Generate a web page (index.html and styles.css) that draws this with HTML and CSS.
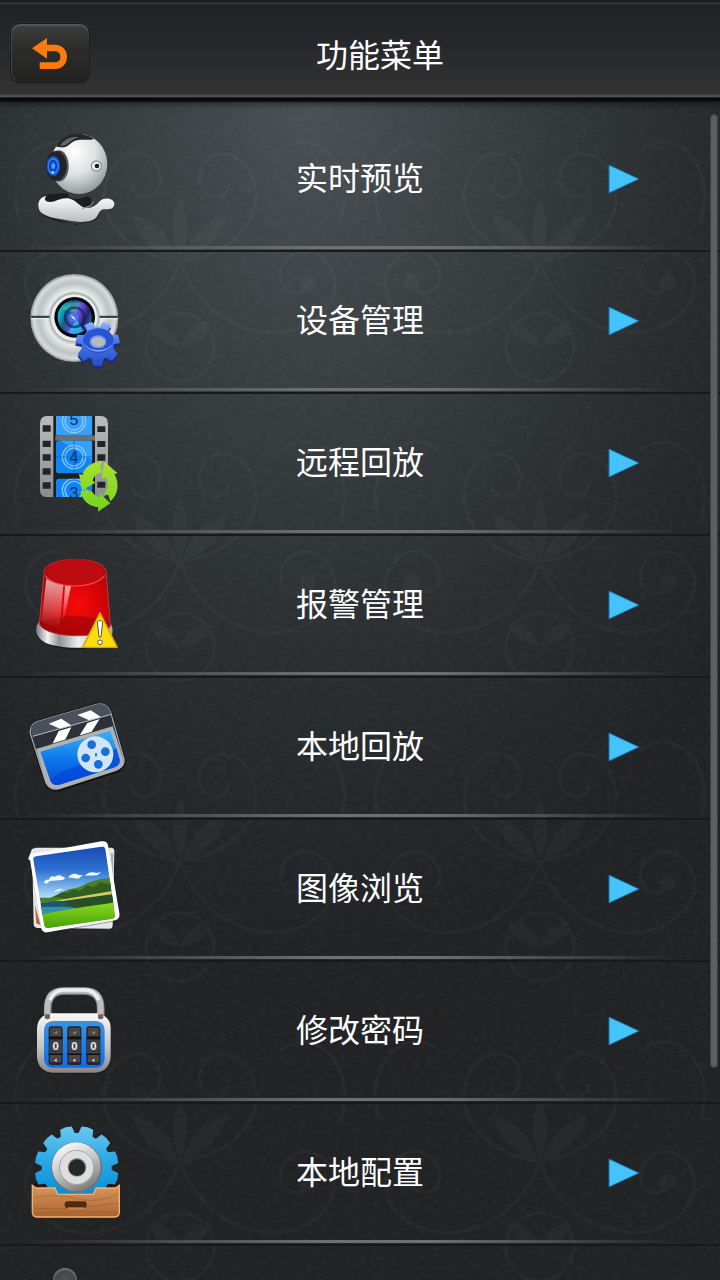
FILE: index.html
```html
<!DOCTYPE html>
<html lang="zh-CN">
<head>
  <meta charset="UTF-8">
  <meta name="viewport" content="width=device-width, initial-scale=1">
  <title>功能菜单</title>
  <link rel="stylesheet" href="styles.css">
</head>
<body>

  <header class="top-bar">
    <button class="back-button" type="button" aria-label="返回">
      <svg viewBox="90 105 120 105" width="40" height="35">
        <path d="M96 142 L141 111 V131 H164 C187 131 201 147 201 167 C201 188 187 204 164 204 H119 V184 H163 C174 184 181 178 181 167 C181 157 174 151 163 151 H141 V173 Z" fill="#ff7a0c"/>
      </svg>
    </button>
    <h1>功能菜单</h1>
  </header>

  <main class="menu-area">
    <!-- leather grain and faint flower pattern -->
    <svg class="backdrop" aria-hidden="true">
      <defs>
        <filter id="grain" x="0" y="0" width="100%" height="100%">
          <feTurbulence type="fractalNoise" baseFrequency="0.15 0.25" numOctaves="3" seed="4"/>
          <feColorMatrix values="0 0 0 0 1  0 0 0 0 1  0 0 0 0 1  0.9 0 0 0 -0.3"/>
        </filter>
        <pattern id="swirls" width="360" height="300" patternUnits="userSpaceOnUse">
          <g fill="none" stroke="#fff" stroke-width="3">
            <path d="M180 160 C120 150 90 110 110 70 C125 40 165 50 160 80 C156 100 130 98 132 82"/>
            <path d="M180 160 C240 150 270 110 250 70 C235 40 195 50 200 80 C204 100 230 98 228 82"/>
            <path d="M180 160 C150 240 60 250 30 200 C10 160 60 130 78 165 C88 190 55 200 52 180"/>
            <path d="M180 160 C210 240 300 250 330 200 C350 160 300 130 282 165 C272 190 305 200 308 180"/>
            <path d="M20 120 C0 60 50 20 80 50 M340 120 C360 60 310 20 280 50"/>
            <circle cx="180" cy="245" r="34"/>
          </g>
          <g fill="#fff">
            <path d="M180 160 Q166 125 180 96 Q194 125 180 160"/>
            <path d="M178 160 Q140 145 132 112 Q168 122 178 160"/>
            <path d="M182 160 Q220 145 228 112 Q192 122 182 160"/>
            <circle cx="52" cy="180" r="8"/>
            <circle cx="308" cy="180" r="8"/>
            <path d="M180 245 Q150 240 150 220 Q172 222 180 245 Q210 240 210 220 Q188 222 180 245"/>
          </g>
        </pattern>
      </defs>
      <rect width="100%" height="100%" filter="url(#grain)" opacity="0.06"/>
      <rect width="100%" height="100%" fill="url(#swirls)" opacity="0.025"/>
    </svg>

    <ul class="menu-list">
      <li>
        <a class="menu-item" href="#preview">
          <svg class="icon" viewBox="78 57 300 300">
            <defs>
              <radialGradient id="ball" cx="0.42" cy="0.3" r="0.75">
                <stop offset="0" stop-color="#fff"/><stop offset="0.5" stop-color="#dfe2e2"/><stop offset="1" stop-color="#8a9292"/>
              </radialGradient>
              <radialGradient id="blueLens">
                <stop offset="0" stop-color="#69c8ff"/><stop offset="0.4" stop-color="#0c55d8"/><stop offset="0.7" stop-color="#2c86f5"/><stop offset="1" stop-color="#0a2f9a"/>
              </radialGradient>
              <linearGradient id="foot" x2="0" y2="1">
                <stop offset="0" stop-color="#fff"/><stop offset="1" stop-color="#b9bcbd"/>
              </linearGradient>
            </defs>
            <path d="M120 312 C170 345 250 350 290 328 C310 300 330 305 347 285 L330 300 L230 346 Z" fill="#15181a" opacity="0.6"/>
            <path d="M128 258 C160 244 265 250 275 268 C275 285 265 294 240 296 L150 282 Z" fill="#1b1d1f"/>
            <path d="M205 246 H255 V262 Q230 272 205 262 Z" fill="#3a3d3f"/>
            <path d="M140 257 C112 262 110 290 122 306 C140 324 180 326 220 334 C250 338 282 336 292 318 C300 298 306 296 322 298 C338 299 346 288 342 277 C336 264 314 262 300 273 C286 288 276 296 254 293 C238 290 228 268 204 265 C180 263 168 276 150 276 C134 275 130 267 140 257 Z" fill="url(#foot)"/>
            <path d="M246 296 L274 286 L280 274" fill="none" stroke="#8d9193" stroke-width="3"/>
            <ellipse cx="237" cy="162" rx="85" ry="90" fill="url(#ball)"/>
            <path d="M168 110 C188 70 240 60 282 86 C270 94 240 84 222 94 C206 102 205 114 182 112 Z" fill="#26282a"/>
            <path d="M180 106 C198 82 220 78 236 82 C214 86 210 102 190 107 Z" fill="#63676a"/>
            <ellipse cx="177" cy="168" rx="29" ry="47" fill="#55585b"/>
            <ellipse cx="169" cy="168" rx="31" ry="45" fill="#222427"/>
            <ellipse cx="160" cy="168" rx="21" ry="31" fill="url(#blueLens)"/>
            <ellipse cx="159" cy="168" rx="10" ry="16" fill="none" stroke="#0a2c9c" stroke-width="4"/>
            <circle cx="158" cy="187" r="4" fill="#8ce5ff"/>
            <circle cx="289" cy="168" r="17" fill="#8f9595"/>
            <circle cx="289" cy="168" r="13" fill="#f1f3f3"/>
            <circle cx="291" cy="168" r="7" fill="#191b1c"/>
          </svg>
          <span class="label">实时预览</span>
          <svg class="arrow" viewBox="0 0 32 32"><path d="M1 2 L31 16 L1 30 Z"/></svg>
        </a>
      </li>

      <li>
        <a class="menu-item" href="#devices">
          <svg class="icon" viewBox="78 63 300 300">
            <defs>
              <radialGradient id="shell">
                <stop offset="0.5" stop-color="#9fa8a7"/><stop offset="0.62" stop-color="#e6eae9"/><stop offset="0.8" stop-color="#bcc3c2"/><stop offset="0.93" stop-color="#d8dbda"/><stop offset="1" stop-color="#8f9594"/>
              </radialGradient>
              <linearGradient id="glass" x1="0" y1="0.3" x2="1" y2="0.7">
                <stop offset="0" stop-color="#10d0d8"/><stop offset="0.3" stop-color="#1a5a86"/><stop offset="0.55" stop-color="#6c50d8"/><stop offset="0.8" stop-color="#2b1c78"/><stop offset="1" stop-color="#108a98"/>
              </linearGradient>
              <linearGradient id="cog" gradientUnits="userSpaceOnUse" x1="0" y1="-60" x2="0" y2="60">
                <stop offset="0" stop-color="#88aaf8"/><stop offset="0.5" stop-color="#4673e6"/><stop offset="1" stop-color="#2a51c8"/>
              </linearGradient>
              <!-- seven teeth, drawn as one shape so the shading runs across them all -->
              <path id="cogShape" d="M-18 45 L-13 66 H13 L18 45 L25 42 L43 52 L60 31 L47 14 L48 2 L67 -2 L61 -27 L41 -26 L31 -38 L40 -55 L17 -66 L5 -50 H-5 L-17 -66 L-40 -55 L-31 -38 L-41 -26 L-61 -27 L-67 -2 L-48 2 L-47 14 L-60 31 L-43 52 L-25 42 Z"/>
            </defs>
            <circle cx="223" cy="204" r="132" fill="url(#shell)"/>
            <path d="M93 201 H150 M298 201 H354" stroke="#3d4443" stroke-width="7"/>
            <path d="M93 206 H150 M298 206 H354" stroke="#f5f7f6" stroke-width="3"/>
            <circle cx="223" cy="202" r="75" fill="#aeb5b3"/>
            <circle cx="223" cy="203" r="70" fill="#e9edeb"/>
            <circle cx="224" cy="202" r="61" fill="#06090b"/>
            <circle cx="224" cy="202" r="51" fill="url(#glass)"/>
            <path d="M188 178 A44 44 0 0 1 240 160 L230 190 Z" fill="#53d9c2" opacity="0.45"/>
            <path d="M205 247 A49 49 0 0 0 250 243 L230 208 Z" fill="#20cdf5" opacity="0.8"/>
            <circle cx="224" cy="202" r="29" fill="none" stroke="#141b54" stroke-width="7" opacity="0.65"/>
            <circle cx="220" cy="202" r="15" fill="#4a72ed"/>
            <path d="M211 194 L223 202 L227 212 L217 204 Z" fill="#d8f3ff"/>
            <use href="#cogShape" transform="translate(293 289)" fill="#162f87"/>
            <use href="#cogShape" transform="translate(293 281)" fill="url(#cog)"/>
            <ellipse cx="295" cy="272" rx="46" ry="37" fill="#2855cf"/>
            <path d="M250 276 A46 37 0 0 0 340 276 A46 30 0 0 1 250 276" fill="#7f9ff2"/>
            <ellipse cx="294" cy="275" rx="25" ry="19" fill="#7d9df0"/>
            <ellipse cx="295" cy="276" rx="20" ry="14" fill="#b7bcb9"/>
          </svg>
          <span class="label">设备管理</span>
          <svg class="arrow" viewBox="0 0 32 32"><path d="M1 2 L31 16 L1 30 Z"/></svg>
        </a>
      </li>

      <li>
        <a class="menu-item" href="#remote-playback">
          <svg class="icon" viewBox="78 54 300 300">
            <defs>
              <linearGradient id="film" x2="0" y2="1">
                <stop offset="0" stop-color="#b9bbbc"/><stop offset="1" stop-color="#8b8d8e"/>
              </linearGradient>
              <linearGradient id="lime" gradientUnits="userSpaceOnUse" x1="0" y1="199" x2="0" y2="350">
                <stop offset="0" stop-color="#a8e030"/><stop offset="1" stop-color="#72d41c"/>
              </linearGradient>
              <clipPath id="frames"><path d="M168 63 H277 V113 Q277 121 269 121 H176 Q168 121 168 113 Z M168 145 Q168 137 176 137 H269 Q277 137 277 145 V227 Q277 235 269 235 H176 Q168 235 168 227 Z M168 260 Q168 251 176 251 H277 V306 H168 Z"/></clipPath>
            </defs>
            <path d="M141 63 H302 Q324 63 324 86 V284 Q324 306 302 306 H141 Q120 306 120 284 V86 Q120 63 141 63 Z" fill="url(#film)"/>
            <path d="M160 63 H285 V306 H160 Z" fill="#1d2022"/>
            <path d="M166 121 H285 V137 H166 Z" fill="#6e6e6e"/>
            <g clip-path="url(#frames)">
              <path d="M160 60 H285 V306 H160 Z" fill="#1184f3"/>
              <path d="M160 60 H285 V200 L160 125 Z" fill="#36a0fb"/>
              <g fill="none" stroke="#86c9ff" stroke-width="4">
                <circle cx="222" cy="78" r="35"/><circle cx="222" cy="78" r="27"/>
                <circle cx="222" cy="186" r="35"/><circle cx="222" cy="186" r="27"/>
                <circle cx="222" cy="286" r="35"/><circle cx="222" cy="286" r="27"/>
              </g>
              <path d="M160 186 H285 M222 137 V235" stroke="#0a63c0" stroke-width="2"/>
              <g class="film-number">
                <text x="222" y="91">5</text><text x="222" y="203">4</text><text x="222" y="311">3</text>
              </g>
            </g>
            <g fill="#222426">
              <path d="M128 91H152V110H128Z M128 137H152V156H128Z M128 178H152V197H128Z M128 220H152V239H128Z M128 262H152V281H128Z"/>
              <path d="M292 94H316V111H292Z M292 138H316V156H292Z M292 178H316V197H292Z M292 260H316V278H292Z"/>
            </g>
            <g fill="url(#lime)">
              <path d="M237 236 L247 240 C256 214 278 200 307 199 L300 216 L309 232 C292 234 282 243 278 257 L286 263 L246 286 Z"/>
              <path d="M313 200 L353 235 L343 237 C360 266 354 300 331 319 L325 301 L310 296 C325 282 326 263 318 247 L304 252 Z"/>
              <path d="M241 290 L262 284 L278 292 C285 303 293 307 301 306 L299 294 L331 325 L294 350 L295 337 C268 334 248 318 241 290 Z"/>
            </g>
          </svg>
          <span class="label">远程回放</span>
          <svg class="arrow" viewBox="0 0 32 32"><path d="M1 2 L31 16 L1 30 Z"/></svg>
        </a>
      </li>

      <li>
        <a class="menu-item" href="#alarms">
          <svg class="icon" viewBox="78 45 300 300">
            <defs>
              <radialGradient id="lamp" cx="0.55" cy="0.6" r="0.6">
                <stop offset="0" stop-color="#fa0a0a"/><stop offset="0.6" stop-color="#d00408"/><stop offset="1" stop-color="#a50509"/>
              </radialGradient>
              <linearGradient id="chrome">
                <stop offset="0" stop-color="#777"/><stop offset="0.15" stop-color="#f4f4f4"/><stop offset="0.3" stop-color="#909192"/><stop offset="0.55" stop-color="#eee"/><stop offset="1" stop-color="#aaa"/>
              </linearGradient>
              <linearGradient id="shine" x2="0" y2="1">
                <stop offset="0" stop-color="#fff" stop-opacity="0.65"/><stop offset="1" stop-color="#fff" stop-opacity="0"/>
              </linearGradient>
            </defs>
            <path d="M106 270 C110 345 330 350 340 272 Z" fill="#111" opacity="0.6"/>
            <path d="M119 242 C98 268 110 294 136 308 C185 328 270 328 315 308 C342 292 343 268 329 246 Z" fill="url(#chrome)"/>
            <path d="M133 92 C142 48 306 46 318 92 L331 258 C316 298 140 298 118 252 Z" fill="url(#lamp)" stroke="#c9353a" stroke-width="3"/>
            <path d="M118 250 C150 222 290 222 330 250 C318 294 142 300 118 252 Z" fill="#8e0508" opacity="0.5"/>
            <ellipse cx="225" cy="95" rx="86" ry="38" fill="#bd0b12"/>
            <path d="M136 106 C160 150 286 148 314 106" fill="none" stroke="#f04a4e" stroke-width="4"/>
            <path d="M139 116 Q155 130 190 136 L179 263 Q145 260 124 244 Z" fill="url(#shine)"/>
            <path d="M195 138 L213 139 L197 216 L187 250 Z" fill="url(#shine)"/>
            <path d="M300 218 L352 322 H248 Z" fill="#ffdd08" stroke="#d5a400" stroke-width="4" stroke-linejoin="round"/>
            <path d="M292 246 Q300 235 308 246 L303 291 H297 Z" fill="#fff" stroke="#555" stroke-width="3"/>
            <circle cx="300" cy="307" r="7" fill="#fff" stroke="#555" stroke-width="3"/>
          </svg>
          <span class="label">报警管理</span>
          <svg class="arrow" viewBox="0 0 32 32"><path d="M1 2 L31 16 L1 30 Z"/></svg>
        </a>
      </li>

      <li>
        <a class="menu-item" href="#local-playback">
          <svg class="icon" viewBox="78 36 300 300">
            <defs>
              <linearGradient id="screen" x2="0" y2="1">
                <stop offset="0" stop-color="#3ab2f6"/><stop offset="0.55" stop-color="#0c74ea"/><stop offset="1" stop-color="#064bd3"/>
              </linearGradient>
              <clipPath id="board"><path d="M91 146 Q88 119 112 110 L290 58 Q321 52 332 82 L337 122 L108 190 Z"/></clipPath>
            </defs>
            <path d="M91 146 Q88 119 112 110 L290 58 Q321 52 332 82 L372 222 Q376 248 348 260 L178 315 Q151 320 138 297 Z" fill="#0d0f11" stroke="#111" stroke-width="8"/>
            <path d="M91 146 Q88 119 112 110 L290 58 Q321 52 332 82 L372 222 Q374 246 348 256 L178 311 Q151 318 138 294 Z" fill="#2b303a" stroke="#a1a5a8" stroke-width="4"/>
            <g clip-path="url(#board)">
              <path d="M88 112 L330 45 L332 88 L98 154 Z" fill="#4a505c"/>
              <path d="M146 116 L184 101 L216 122 L180 131 Z M232 90 L272 76 L304 97 L268 106 Z" fill="#fff"/>
              <path d="M176 138 L214 127 L192 172 L154 183 Z M262 114 L299 102 L274 142 L238 152 Z" fill="#fff"/>
              <path d="M98 154 L334 88" stroke="#b7bbc1" stroke-width="3"/>
            </g>
            <path d="M108 192 L338 124 L371 224 Q374 246 348 256 L178 311 Q151 316 138 294 Z" fill="#adb1b4"/>
            <path d="M121 200 L331 137 L359 224 Q361 240 344 247 L178 299 Q159 303 151 287 Z" fill="url(#screen)"/>
            <path d="M151 287 C190 242 250 250 350 190 L359 224 Q361 240 344 247 L178 299 Q159 303 151 287 Z" fill="#0247d8" opacity="0.7"/>
            <circle cx="286" cy="208" r="54" fill="#d0e6f8"/>
            <g fill="#176fda">
              <circle cx="275" cy="179" r="13"/><circle cx="316" cy="200" r="13"/><circle cx="257" cy="219" r="13"/><circle cx="295" cy="238" r="13"/>
              <ellipse cx="288" cy="209" rx="3" ry="6"/>
            </g>
          </svg>
          <span class="label">本地回放</span>
          <svg class="arrow" viewBox="0 0 32 32"><path d="M1 2 L31 16 L1 30 Z"/></svg>
        </a>
      </li>

      <li>
        <a class="menu-item" href="#images">
          <svg class="icon" viewBox="78 42 300 300">
            <defs>
              <linearGradient id="sky" x2="0" y2="1">
                <stop offset="0" stop-color="#1747ad"/><stop offset="0.3" stop-color="#2c6fd2"/><stop offset="0.6" stop-color="#a9daf7"/>
              </linearGradient>
              <linearGradient id="grass" x2="0" y2="1">
                <stop offset="0" stop-color="#8bd91d"/><stop offset="1" stop-color="#3d9a08"/>
              </linearGradient>
              <clipPath id="photo"><path d="M100 104 Q98 97 108 94 L304 65 Q314 63 316 73 L345 271 Q346 280 336 282 L145 309 Q136 311 133 302 Z"/></clipPath>
            </defs>
            <path d="M108 68 L335 68 Q344 70 343 80 L338 302 Q337 311 328 311 L112 309 Q101 308 101 297 L97 112 L84 102 L96 72 Z" fill="#e3e5e6"/>
            <path d="M105 240 L121 300 L109 295 Z" fill="#c95731"/>
            <path d="M332 84 L340 86 L339 170 Z" fill="#a9adaf"/>
            <path d="M89 102 Q87 92 98 88 L304 50 Q321 47 324 63 L358 268 Q361 284 346 289 L143 325 Q129 327 124 314 Z" fill="#101214" opacity="0.35"/>
            <path d="M89 99 Q87 89 98 86 L304 49 Q321 46 324 61 L358 265 Q361 281 346 286 L143 322 Q129 324 124 311 Z" fill="#fff"/>
            <g clip-path="url(#photo)">
              <path d="M90 55 H350 V320 H90 Z" fill="url(#sky)"/>
              <path d="M130 172 Q142 160 146 165 Q150 150 166 155 Q178 146 190 156 Q202 160 186 165 L150 168 L140 176 Z M204 157 Q218 140 236 150 L248 151 L235 161 Z M255 152 Q268 137 290 144 L303 141 L292 151 Z M160 202 Q175 185 190 194 Z" fill="#eef8ff"/>
              <path d="M118 218 L150 218 Q180 208 206 193 Q240 188 264 173 Q302 158 350 158 V225 L125 242 Z" fill="#4b7e28"/>
              <path d="M160 216 L186 201 L204 203 L221 193 L240 198 L262 181 L280 187 L300 172 L326 178 L333 169 V202 L210 223 Z" fill="#2f5e20"/>
              <path d="M118 235 L190 226 L350 207 V250 L128 272 Z" fill="#21576d"/>
              <path d="M190 226 L345 207 L343 233 L230 248 L202 240 Z" fill="#284e25"/>
              <path d="M165 227 L346 196 V206 L190 228 Z" fill="#d4c76b"/>
              <path d="M120 246 L190 245 L230 249 L210 263 L128 274 Z" fill="#3290a9"/>
              <path d="M120 269 Q180 257 250 246 L350 232 V320 H120 Z" fill="url(#grass)"/>
            </g>
          </svg>
          <span class="label">图像浏览</span>
          <svg class="arrow" viewBox="0 0 32 32"><path d="M1 2 L31 16 L1 30 Z"/></svg>
        </a>
      </li>

      <li>
        <a class="menu-item" href="#password">
          <svg class="icon" viewBox="78 48 300 300">
            <defs>
              <linearGradient id="steel" x2="0" y2="1">
                <stop offset="0" stop-color="#f8f8f8"/><stop offset="0.6" stop-color="#c0c0c0"/><stop offset="1" stop-color="#858585"/>
              </linearGradient>
              <linearGradient id="lockFace" x2="0" y2="1">
                <stop offset="0" stop-color="#3b94de"/><stop offset="1" stop-color="#0b6cf0"/>
              </linearGradient>
              <g id="dial">
                <rect x="-21" y="184" width="42" height="116" rx="8" fill="#23252a"/>
                <path d="M-17 188 H17 V213 H-17 Z M-17 270 H17 V292 H-17 Z" fill="#4b4644"/>
                <path d="M-19 224 H19 V266 H-19 Z" fill="#3c4046"/>
                <path d="M-21 219 H21 M-21 268 H21" stroke="#0c0e10" stroke-width="4"/>
                <path d="M-6 206 L5 197 V206 Z" fill="#b28266"/>
                <path d="M-5 286 L3 281 V291 Z" fill="#ddd"/>
                <text class="dial-number" y="254">0</text>
              </g>
            </defs>
            <path d="M143 163 V132 Q143 78 192 78 H253 Q302 78 302 132 V163" fill="none" stroke="#8a8a8a" stroke-width="23"/>
            <path d="M142 160 V130 Q142 77 192 77 H253 Q302 77 302 130 V160" fill="none" stroke="#bcbdbd" stroke-width="17"/>
            <path d="M150 105 Q162 75 192 75 H253 Q284 75 296 105" fill="none" stroke="#eee" stroke-width="11"/>
            <path d="M153 145 H292 Q332 154 332 190 V280 Q330 323 285 326 H158 Q114 323 111 282 V190 Q114 151 153 145 Z" fill="#111" opacity="0.5"/>
            <path d="M153 145 H292 Q332 154 332 188 V275 Q329 319 285 323 H158 Q114 319 111 276 V188 Q114 151 153 145 Z" fill="url(#steel)"/>
            <path d="M294 148 H310 V160 Q302 166 294 160 Z" fill="#775f52"/>
            <path d="M134 148 H150 V160 Q142 166 134 160 Z" fill="#66625e"/>
            <rect x="132" y="168" width="182" height="140" rx="26" fill="url(#lockFace)"/>
            <use href="#dial" x="167"/><use href="#dial" x="223"/><use href="#dial" x="280"/>
          </svg>
          <span class="label">修改密码</span>
          <svg class="arrow" viewBox="0 0 32 32"><path d="M1 2 L31 16 L1 30 Z"/></svg>
        </a>
      </li>

      <li>
        <a class="menu-item" href="#settings">
          <svg class="icon" viewBox="78 39 300 300">
            <defs>
              <linearGradient id="sea" gradientUnits="userSpaceOnUse" x1="0" y1="50" x2="0" y2="250">
                <stop offset="0" stop-color="#6bc8ef"/><stop offset="0.5" stop-color="#2aa9e5"/><stop offset="1" stop-color="#078fd6"/>
              </linearGradient>
              <linearGradient id="ring" x1="0.2" x2="0.7" y2="1">
                <stop offset="0" stop-color="#fff"/><stop offset="0.5" stop-color="#c5c5c5"/><stop offset="1" stop-color="#777"/>
              </linearGradient>
              <linearGradient id="wood" x2="0" y2="1">
                <stop offset="0" stop-color="#d9975a"/><stop offset="1" stop-color="#a9652f"/>
              </linearGradient>
              <path id="tooth" d="M206 85 L212 50 Q230 45 248 50 L254 85 Z"/>
              <clipPath id="gear">
                <circle cx="230" cy="174" r="105"/>
                <use href="#tooth" transform="rotate(15 230 174)"/><use href="#tooth" transform="rotate(45 230 174)"/><use href="#tooth" transform="rotate(75 230 174)"/><use href="#tooth" transform="rotate(105 230 174)"/>
                <use href="#tooth" transform="rotate(-15 230 174)"/><use href="#tooth" transform="rotate(-45 230 174)"/><use href="#tooth" transform="rotate(-75 230 174)"/><use href="#tooth" transform="rotate(-105 230 174)"/>
              </clipPath>
            </defs>
            <path d="M96 226 L118 205 H340 L358 226 V250 H96 Z" fill="#28150a"/>
            <rect x="90" y="40" width="280" height="220" fill="url(#sea)" clip-path="url(#gear)"/>
            <circle cx="230" cy="172" r="76" fill="#77706e"/>
            <circle cx="229" cy="170" r="73" fill="url(#ring)"/>
            <circle cx="230" cy="173" r="53" fill="#a3a1a1"/>
            <circle cx="230" cy="172" r="50" fill="#dededf"/>
            <circle cx="231" cy="172" r="28" fill="#888"/>
            <circle cx="231" cy="173" r="25" fill="#23282b"/>
            <path d="M95 236 H157 L173 257 H280 L296 236 H359 V313 Q359 327 344 327 H110 Q95 327 95 313 Z" fill="#3d1c0b"/>
            <path d="M97 226 L108 234 H165 L173 253 H280 L288 234 H346 L358 226 V306 Q358 321 344 321 H110 Q97 321 97 306 Z" fill="url(#wood)" stroke="#ecb27b" stroke-width="4"/>
            <path d="M103 262 Q170 250 230 266 T354 253 M103 294 Q180 300 240 293 T354 280 M106 310 Q240 302 350 307" fill="none" stroke="#925225" stroke-width="2" opacity="0.7"/>
            <rect x="194" y="274" width="66" height="20" rx="9" fill="#55290f"/>
            <path d="M204 294 H252" stroke="#e1a36c" stroke-width="3"/>
          </svg>
          <span class="label">本地配置</span>
          <svg class="arrow" viewBox="0 0 32 32"><path d="M1 2 L31 16 L1 30 Z"/></svg>
        </a>
      </li>

      <li>
        <a class="menu-item" href="#more" aria-label="更多">
          <svg class="icon" viewBox="78 465 300 300">
            <defs>
              <radialGradient id="knob" cx="0.5" cy="0.55" r="0.55">
                <stop offset="0" stop-color="#4f555a"/><stop offset="0.75" stop-color="#41474c"/><stop offset="1" stop-color="#7c8286"/>
              </radialGradient>
            </defs>
            <circle cx="195" cy="510" r="36" fill="url(#knob)"/>
          </svg>
        </a>
      </li>
    </ul>
    <div class="scroll-thumb"></div>
  </main>

</body>
</html>
```
FILE: styles.css
```css
* {
  box-sizing: border-box;
}

body {
  margin: 0;
  height: 100vh;
  display: flex;
  flex-direction: column;
  overflow: hidden;
  background: #212325;
  color: #fff;
  font-family: "Noto Sans CJK SC", sans-serif;
}

/* header */
.top-bar {
  flex: none;
  display: flex;
  align-items: center;
  gap: 10px;
  height: 102px;
  padding: 4px 60px 0 10px;
  position: relative;
  z-index: 1;
  background: linear-gradient(#1d1e20 0 2px, #35363a 3px 4px, #222327 5px, #26272a 40%, #333 94px, #5a5a5a 96px, #444 97px, #080808 98px 100px, #151617 102px);
  box-shadow: 0 2px 6px rgba(0, 0, 0, 0.5);
}

.back-button {
  display: flex;
  align-items: center;
  justify-content: center;
  width: 80px;
  height: 60px;
  padding: 0;
  border: 1px solid #1a1b1b;
  border-radius: 10px;
  background: linear-gradient(#3e3e3e, #2d2d2b 40%, #222220);
  box-shadow: inset 0 2px 1px #555657, inset 1px 0 1px #444, 0 0 1px 1px #2c2d2f;
  cursor: pointer;
}

.top-bar h1 {
  flex: 1;
  margin: 0;
  font-size: 32px;
  line-height: 48px;
  font-weight: 400;
  text-align: center;
}

/* menu */
.menu-area {
  flex: 1;
  min-height: 0;
  position: relative;
  background: radial-gradient(ellipse 75% 72% at 43% 0, #4b5054, #3b4043 30%, #2a2e31 65%, #202224);
}

.backdrop {
  position: absolute;
  width: 100%;
  height: 100%;
}

.menu-list {
  position: relative;
  height: 100%;
  margin: 0;
  padding: 8px 0 0;
  list-style: none;
  overflow: hidden;
}

.menu-item {
  display: grid;
  grid-template-columns: 100px 1fr 46px;
  align-items: center;
  height: 142px;
  padding: 0 80px 4px 26px;
  color: inherit;
  text-decoration: none;
  background:
    linear-gradient(90deg, transparent 3%, #6e7072 45%, #6e7072 60%, transparent 94%) 0 136px / 100% 3px no-repeat,
    linear-gradient(#17191a, #17191a) 0 140px / 100% 2px no-repeat;
}

.icon {
  width: 100px;
  height: 100px;
}

.label {
  padding-bottom: 6px;
  font-size: 32px;
  line-height: 48px;
  text-align: center;
}

.arrow {
  width: 32px;
  height: 32px;
  justify-self: end;
  fill: #45c4fc;
  stroke: #1c6fa8;
  stroke-width: 1;
}

.film-number {
  font: 48px "Liberation Sans", sans-serif;
  fill: #082f68;
  text-anchor: middle;
}

.dial-number {
  font: bold 34px "Liberation Sans", sans-serif;
  fill: #eee;
  text-anchor: middle;
}

.scroll-thumb {
  position: absolute;
  top: 12px;
  right: 2px;
  width: 8px;
  height: 81%;
  border: 1px solid #3c3e40;
  border-radius: 4px;
  background: #5c5e60;
}
```
